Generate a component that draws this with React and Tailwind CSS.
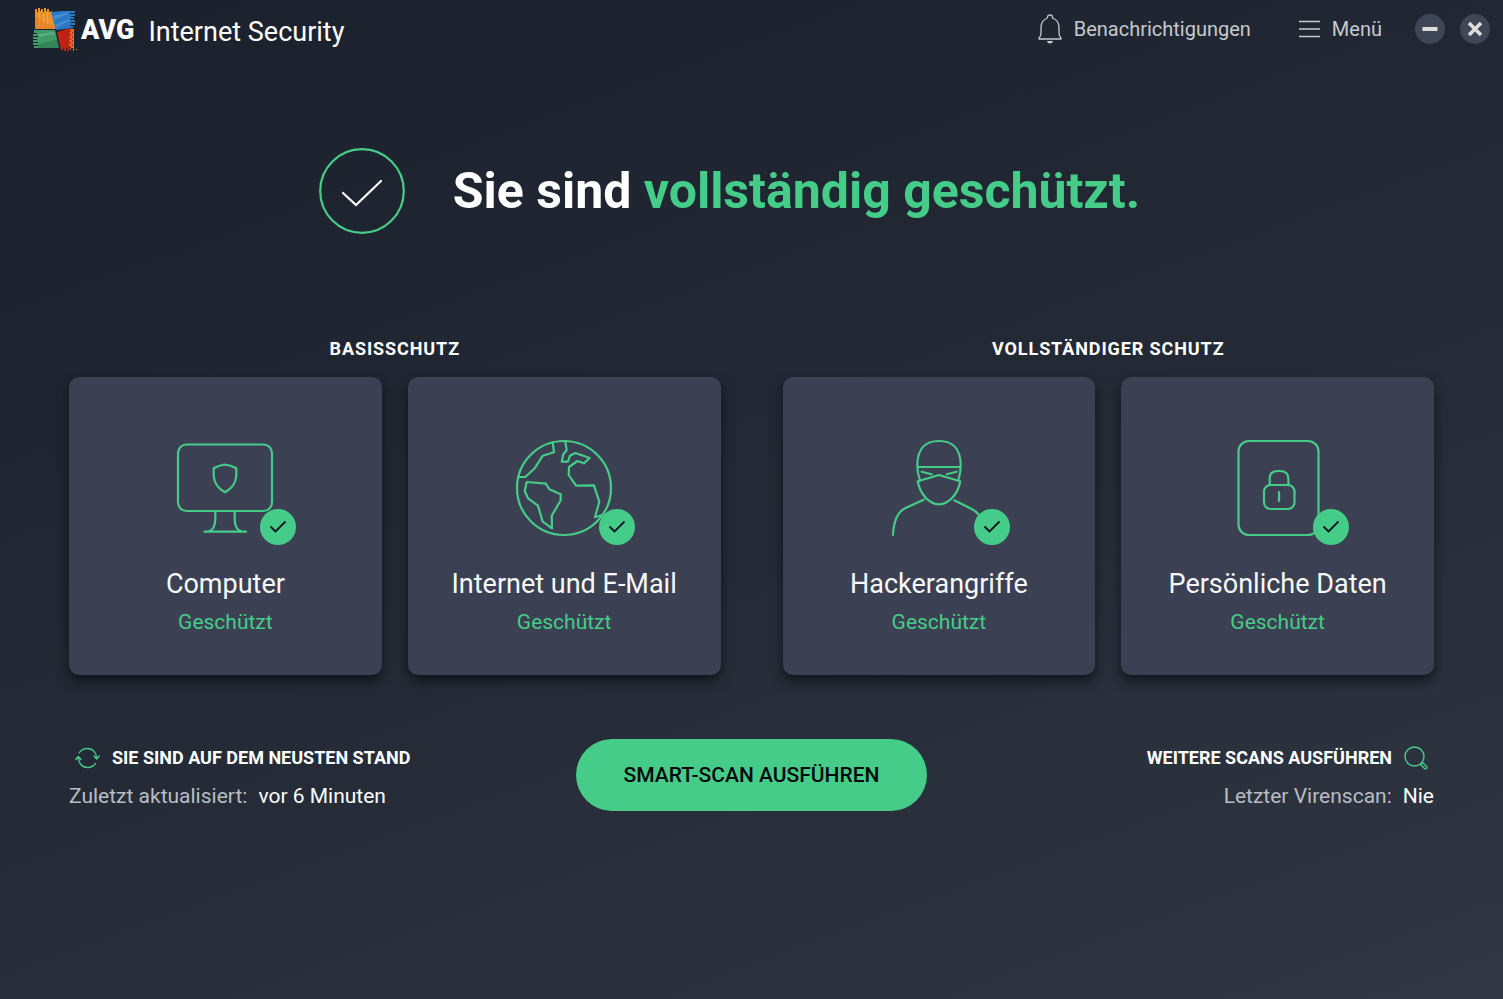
import React from "react";

const Tick = ({ className, d, width }) => (
  <path d={d} className={className} fill="none" strokeWidth={width} strokeLinecap="round" strokeLinejoin="miter" />
);

function Logo() {
  return (
    <svg viewBox="0 0 46 44" className="h-11 w-[46px]" aria-hidden="true">
      <path fill="#e8922f" d="M3 1H5V4H6V0H8V3H9V1H11V4H12V0H14V3H15V1H17V4L20 3L24 21H3Z" />
      <path fill="#edc07a" d="M7 5H8V19H7ZM11 6H12V19H11ZM15 5H16V19H15Z" opacity=".5" />
      <path fill="#e2701c" d="M3 8L18 17L24 21H3Z" opacity=".45" />
      <path fill="#2b78c4" d="M19 4L30 3H43V5H38V6H43V8H39V9H42V11H38V12H43V14H39V15H43V17H38V18H41V20L24 22Z" />
      <path fill="#5aa6e4" d="M21 8L36 4V6L22 12ZM23 17L37 11V13L24 20Z" opacity=".5" />
      <path fill="#3f9a66" d="M2 22H23L27 40H2V38H6V37H1V35H6V34H1V32H5V31H1V29H6V28H1V26H5V25H2Z" />
      <path fill="#7cc79a" d="M7 26L23 24V26L7 29Z" opacity=".45" />
      <path fill="#24704b" d="M6 36L25 32L27 40H6Z" opacity=".5" />
      <path fill="#e2701c" d="M35 21H42V43H41V40H39V42H38V39H35Z" />
      <path fill="#bd2212" d="M25 24L38 20L37 43H35V40H34V43H32V40H31V42H29Z" />
      <path stroke="#bd2212" strokeWidth="1" strokeDasharray="2 2" d="M38.500 22V40M40.500 24V40" />
      <path fill="#c9bdb8" d="M44 41H45V42H44Z" />
    </svg>
  );
}

function Monitor() {
  return (
    <>
      <rect x="1" y="4.500" width="94" height="66.500" rx="8.500" />
      <path d="M38.300 71V79Q38 90 32 91M57.700 71V79Q58 90 64 91M27.500 91.700H69" />
      <path d="M48 24.500Q42.500 25 36.700 28.300V36Q37.500 46.500 48 52.300Q58.500 46.500 59.300 36V28.300Q53.500 25 48 24.500Z" />
    </>
  );
}

function Globe() {
  return (
    <>
      <circle cx="48" cy="48" r="47" />
      <path d="M3 37H9.300L18.700 28.300L26.700 15.700L38 12.300L36.700 2.300" />
      <path d="M49.300 1.500L50.700 10.300L47.300 14.300L45.700 21.700H52L54 15.700L59.300 13L73.700 18L68 23.300L61.300 21L53 27L52.700 35L60 45.700L78 45.300L83.300 61.700L79 77.300L86 75" />
      <path d="M10.700 42L30 43.700L33.300 49.300L44.700 54.300V60.300L35.700 75.700L36 88.300L26.700 81.700L22 65.700L12 58.300L8.700 51Z" />
    </>
  );
}

function Hacker() {
  return (
    <>
      <path d="M29 40.700Q26 32 26.300 24C27 8 34 1 48 1S69 8 69.700 24Q70 32 67.300 40.300M26.500 27H69.500" />
      <path d="M26.700 41.300L48 35L69.300 41.300C67 54 58 64.300 48 64.300S29 54 26.700 41.300Z" />
      <path d="M30.700 31.700L40.700 34.300M55.700 34.300L65.700 31.700" />
      <path d="M32.700 59.700L14 68.300Q3 74 2 95M63.300 60.300L80.700 69Q85 71 88 75" />
    </>
  );
}

function Lock() {
  return (
    <>
      <rect x="8.500" y="1" width="80" height="94" rx="10.500" />
      <rect x="34" y="45" width="30.500" height="24" rx="6.500" />
      <path d="M39.700 45V39Q39.700 31 48 31H50Q58.400 31 58.400 39V45M49 52V61" />
    </>
  );
}

const groups = [
  {
    title: "Basisschutz",
    cards: [
      { name: "Computer", Icon: Monitor },
      { name: "Internet und E-Mail", Icon: Globe },
    ],
  },
  {
    title: "Vollständiger Schutz",
    cards: [
      { name: "Hackerangriffe", Icon: Hacker },
      { name: "Persönliche Daten", Icon: Lock },
    ],
  },
];

function Card({ name, Icon }) {
  return (
    <button
      type="button"
      className="flex flex-col items-center rounded-[10px] bg-[#3b4152] pt-[63px] pb-[38px] shadow-[0_6px_12px_rgba(8,11,17,0.7)]"
    >
      <span className="relative block size-24">
        <svg viewBox="0 0 96 96" className="size-24 overflow-visible stroke-[#46cc89]" fill="none" strokeWidth="2.200" strokeLinejoin="round" strokeLinecap="round" aria-hidden="true">
          <Icon />
        </svg>
        <svg viewBox="0 0 36 36" className="absolute -right-[23px] -bottom-[9px] size-9" aria-hidden="true">
          <circle cx="18" cy="18" r="18" fill="#46cc89" />
          <Tick className="stroke-[#10151c]" width="1.800" d="M11 18L15.500 22.500L25 13" />
        </svg>
      </span>
      <span className="mt-7 text-[27px] leading-10 text-[#f7f8f9]">{name}</span>
      <span className="mt-[3px] text-[21px] leading-[30px] text-[#46cc89]">Geschützt</span>
    </button>
  );
}

export default function App() {
  return (
    <div className="flex min-h-screen flex-col bg-[linear-gradient(160deg,#1b212c,#232a35_50%,#303643)] font-['Roboto',sans-serif] text-white">
      <header className="flex items-center justify-between pr-[13px] pl-8">
        <div className="flex items-start pt-2">
          <Logo />
          <span className="ml-[3px] text-[27px] leading-11 font-black">AVG</span>
          <h1 className="ml-[14px] text-[27px] leading-12">Internet Security</h1>
        </div>
        <nav className="flex items-center pt-[2px] text-xl leading-[30px] text-[#c6c9ce]">
          <button type="button" className="flex items-center gap-3">
            <svg viewBox="0 0 24 30" className="h-[30px] w-6" fill="none" stroke="currentColor" strokeWidth="1.300" strokeLinejoin="round" aria-hidden="true">
              <path d="M9.500 4V3Q9.500 1 12 1T14.500 3V4Q20.500 6 21 13V19Q21 22 23 24V25H1V24Q3 22 3 19V13Q3.500 6 9.500 4" />
              <path d="M9 27H15Q14.500 29.500 12 29.500T9 27Z" fill="currentColor" stroke="none" />
            </svg>
            Benachrichtigungen
          </button>
          <button type="button" className="ml-12 flex items-center gap-3">
            <svg viewBox="0 0 21 18" className="h-[18px] w-[21px]" fill="none" stroke="currentColor" strokeWidth="1.300" aria-hidden="true">
              <path d="M0 1.500H21M0 9H21M0 16.500H21" />
            </svg>
            Menü
          </button>
          <button type="button" aria-label="Minimieren" className="ml-[33px] flex size-[30px] items-center justify-center rounded-full bg-[#3f4656]">
            <svg viewBox="0 0 16 16" className="size-4" stroke="#dedddb" strokeWidth="4" aria-hidden="true">
              <path d="M0.500 8H15.500" />
            </svg>
          </button>
          <button type="button" aria-label="Schließen" className="ml-[15px] flex size-[30px] items-center justify-center rounded-full bg-[#3f4656]">
            <svg viewBox="0 0 16 16" className="size-4" stroke="#dedddb" strokeWidth="3.500" aria-hidden="true">
              <path d="M2 2L14 14M14 2L2 14" />
            </svg>
          </button>
        </nav>
      </header>

      <main className="px-[69px]">
        <section className="mt-[92px] flex items-center justify-center gap-12 pr-[44px]">
          <svg viewBox="0 0 86 86" className="size-[86px] shrink-0" fill="none" aria-hidden="true">
            <circle cx="43" cy="43" r="41.800" stroke="#46cc89" strokeWidth="2.200" />
            <Tick className="stroke-white" width="2.200" d="M24 45L37 57L62 33" />
          </svg>
          <h2 className="text-[50px] leading-[64px] font-bold">
            Sie sind <span className="text-[#46cc89]">vollständig geschützt.</span>
          </h2>
        </section>

        <div className="mt-[101px] grid grid-cols-2 gap-[62px]">
          {groups.map((group) => (
            <section key={group.title}>
              <h3 className="text-center text-lg leading-7 font-bold tracking-wider uppercase">{group.title}</h3>
              <div className="mt-[14px] grid grid-cols-2 gap-[26px]">
                {group.cards.map((card) => (
                  <Card key={card.name} {...card} />
                ))}
              </div>
            </section>
          ))}
        </div>

        <footer className="mt-16 grid grid-cols-[1fr_auto_1fr] items-start">
          <div>
            <button type="button" className="flex items-center gap-3 pl-[6px] text-lg leading-[38px] font-bold uppercase">
              <svg viewBox="0 0 25 22" className="h-[22px] w-[25px]" fill="none" stroke="#46cc89" strokeWidth="1.300" strokeLinecap="round" strokeLinejoin="round" aria-hidden="true">
                <path d="M4 6Q7 1.500 12.500 1.500C18 1.500 21.700 6 21.700 11.500M19 9L21.700 12L24.300 9" />
                <path d="M20.500 16.500Q17.500 20.500 12.500 20.500C7 20.500 3.300 16 3.300 10M0.700 12.500L3.300 9.500L6 12.500" />
              </svg>
              Sie sind auf dem neusten Stand
            </button>
            <p className="flex gap-[11px] text-[21px] leading-[38px]">
              <span className="text-[#b9bcc3]">Zuletzt aktualisiert:</span>
              <span>vor 6 Minuten</span>
            </p>
          </div>
          <button type="button" className="rounded-full bg-[#46cc89] px-12 text-[21px] leading-[72px] font-medium text-[#05080c] uppercase">
            Smart-Scan ausführen
          </button>
          <div className="flex flex-col items-end">
            <button type="button" className="flex items-center gap-3 pr-[6px] text-lg leading-[38px] font-bold uppercase">
              Weitere Scans ausführen
              <svg viewBox="0 0 24 24" className="size-6" fill="none" stroke="#46cc89" strokeWidth="1.400" strokeLinejoin="round" aria-hidden="true">
                <circle cx="10.500" cy="10.500" r="9.500" />
                <path d="M16.500 18.500L18.500 16.500L22.500 20.500Q23.300 21.500 22.500 22.300Q21.500 23.300 20.500 22.500Z" />
              </svg>
            </button>
            <p className="flex gap-[11px] text-[21px] leading-[38px]">
              <span className="text-[#b9bcc3]">Letzter Virenscan:</span>
              <span>Nie</span>
            </p>
          </div>
        </footer>
      </main>
    </div>
  );
}
